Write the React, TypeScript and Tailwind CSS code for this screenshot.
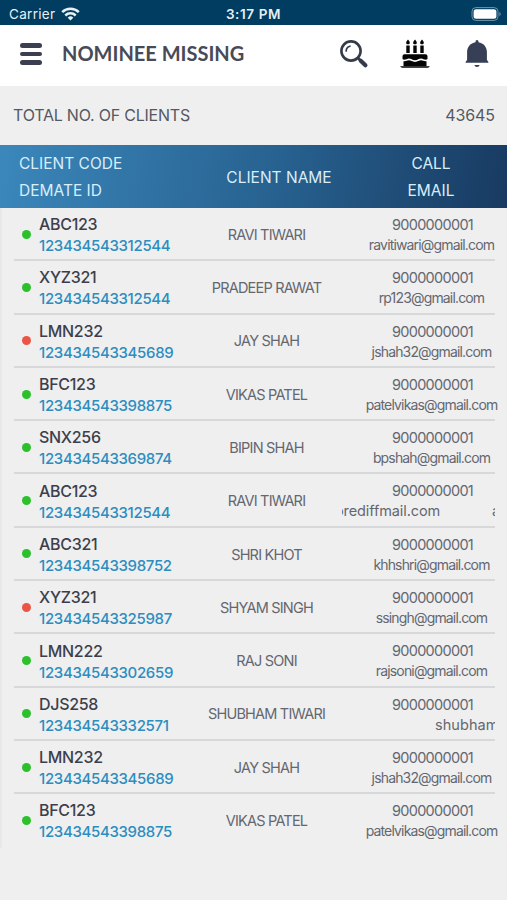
type Client = {
  code: string;
  demat: string;
  name: string;
  email: string;
  active: boolean;
  marquee?: "end" | "start";
};

const clients: Client[] = [
  { code: "ABC123", demat: "123434543312544", name: "RAVI TIWARI", email: "ravitiwari@gmail.com", active: true },
  { code: "XYZ321", demat: "123434543312544", name: "PRADEEP RAWAT", email: "rp123@gmail.com", active: true },
  { code: "LMN232", demat: "123434543345689", name: "JAY SHAH", email: "jshah32@gmail.com", active: false },
  { code: "BFC123", demat: "123434543398875", name: "VIKAS PATEL", email: "patelvikas@gmail.com", active: true },
  { code: "SNX256", demat: "123434543369874", name: "BIPIN SHAH", email: "bpshah@gmail.com", active: true },
  { code: "ABC123", demat: "123434543312544", name: "RAVI TIWARI", email: "orediffmail.com", active: true, marquee: "end" },
  { code: "ABC321", demat: "123434543398752", name: "SHRI KHOT", email: "khhshri@gmail.com", active: true },
  { code: "XYZ321", demat: "123434543325987", name: "SHYAM SINGH", email: "ssingh@gmail.com", active: false },
  { code: "LMN222", demat: "123434543302659", name: "RAJ SONI", email: "rajsoni@gmail.com", active: true },
  { code: "DJS258", demat: "123434543332571", name: "SHUBHAM TIWARI", email: "shubham", active: true, marquee: "start" },
  { code: "LMN232", demat: "123434543345689", name: "JAY SHAH", email: "jshah32@gmail.com", active: true },
  { code: "BFC123", demat: "123434543398875", name: "VIKAS PATEL", email: "patelvikas@gmail.com", active: true },
];

function StatusBar() {
  return (
    <div className="grid h-[25px] grid-cols-3 items-center bg-[#003d60] pt-[2px] text-[#e6f0f5]">
      <div className="flex items-center gap-[6px] pl-[9px] text-[13.5px] leading-4 tracking-[0.3px]">
        Carrier
        <svg width="19" height="14" viewBox="0 0 19 14" fill="none" stroke="currentColor" strokeWidth="2.5">
          <path d="M1.2 5.2a11.8 11.8 0 0 1 16.6 0" />
          <path d="M4.3 8.5a7.4 7.4 0 0 1 10.4 0" />
          <path d="M9.5 13.4 6.7 10.7a4 4 0 0 1 5.6 0z" fill="currentColor" stroke="none" />
        </svg>
      </div>
      <div className="text-center text-[13.5px] leading-4 font-semibold tracking-[0.6px] whitespace-nowrap">3:17 PM</div>
      <div className="flex justify-end pr-[6px]">
        <svg width="30" height="14" viewBox="0 0 30 14">
          <rect x="1" y="0.6" width="26" height="12.8" rx="3.8" fill="none" stroke="#6f97ad" strokeWidth="1" />
          <rect x="2.6" y="2.2" width="22.8" height="9.6" rx="2.5" fill="#fff" />
          <path d="M28.4 5v4a2.2 2.2 0 0 0 0-4z" fill="#6f97ad" />
        </svg>
      </div>
    </div>
  );
}

function SearchIcon() {
  return (
    <svg width="30" height="30" viewBox="0 0 30 30" fill="none" stroke="#363b4b" strokeLinecap="round">
      <circle cx="12" cy="12" r="9.6" strokeWidth="2.6" />
      <path d="M7.2 12a5 5 0 0 1 3.7-4.8" strokeWidth="1.7" />
      <path d="m19 19 2.5 2.5" strokeWidth="2.5" />
      <path d="m21.7 21.7 4.7 4.5" strokeWidth="4.2" />
    </svg>
  );
}

function CakeIcon() {
  return (
    <svg width="30" height="30" viewBox="0 0 30 30" fill="#050505">
      <path d="M8 .4c2.4 2.4 2.4 4.8 0 4.8S5.6 2.8 8 .4zM15 .4c2.4 2.4 2.4 4.8 0 4.8S12.6 2.8 15 .4zM22 .4c2.4 2.4 2.4 4.8 0 4.8S19.6 2.8 22 .4z" />
      <path d="M6.3 6.5h3.4v7.5H6.3zM13.3 6.5h3.4v7.5h-3.4zM20.3 6.5h3.4v7.5h-3.4z" />
      <path d="M4.5 15.2h21a2 2 0 0 1 2 2V20c-2 2-4.3-.5-6.3-.5-2.2 0-3.5 1.7-6.2 1.7s-4-1.7-6.2-1.7c-2 0-4.3 2.5-6.3.5v-2.8a2 2 0 0 1 2-2z" />
      <path d="M3.5 22.2c2 .5 3.6-.9 5.4-.9 2 0 3.3 1.6 6.1 1.6s4.1-1.6 6.1-1.6c1.8 0 3.4 1.4 5.4.9v5h-23z" />
      <path d="M0 27.2h30l-1.8 1.6H1.8z" />
    </svg>
  );
}

function BellIcon() {
  return (
    <svg width="24" height="28" viewBox="0 0 24 28" fill="#363f55">
      <path d="M12 0c1 0 1.5.9 1.5 2.2 5 .9 8.4 4.6 8.4 9.8v7.6c0 1.3 1.6 1.5 1.6 3.2H.5c0-1.700 1.600-1.900 1.600-3.200V12c0-5.200 3.400-8.900 8.400-9.800C10.500.9 11 0 12 0z" />
      <path d="M9.3 25h5.4a2.8 2.6 0 0 1-5.4 0z" />
    </svg>
  );
}

function Header() {
  return (
    <header className="flex h-[61px] items-center bg-white pb-[3px]">
      <div className="ml-[20px] flex w-[22px] flex-col gap-[4px]">
        <span className="h-[4.5px] rounded-full bg-[#3b3f4f]" />
        <span className="h-[4.5px] rounded-full bg-[#3b3f4f]" />
        <span className="h-[4.5px] rounded-full bg-[#3b3f4f]" />
      </div>
      <h1 className="ml-[20px] pb-[3px] font-['Lato',sans-serif] text-[20px] leading-6 font-bold whitespace-nowrap text-[#484b56]">
        NOMINEE MISSING
      </h1>
      <div className="ml-auto flex items-center pr-[18px]">
        <SearchIcon />
        <div className="ml-[31px]"><CakeIcon /></div>
        <div className="ml-[35px]"><BellIcon /></div>
      </div>
    </header>
  );
}

function Email({ client }: { client: Client }) {
  if (client.marquee === "end") {
    return (
      <div className="-ml-[8px] flex w-[153px] justify-between overflow-hidden text-[14.5px] tracking-[-0.1px] whitespace-nowrap">
        <span className="-ml-[7px]">{client.email}</span>
        <span className="-mr-[5px]">a</span>
      </div>
    );
  }
  if (client.marquee === "start") {
    return (
      <div className="-ml-[8px] w-[153px] overflow-hidden pl-[93px] text-[14.5px] tracking-[0.05px] whitespace-nowrap">
        {client.email}
      </div>
    );
  }
  return <div className="-mr-[18px] text-center text-[14px] tracking-[-0.84px] whitespace-nowrap">{client.email}</div>;
}

function Row({ client }: { client: Client }) {
  return (
    <li className="mr-[12px] ml-[12px] grid h-[53.3px] grid-cols-[169px_167px_145px] border-b-2 border-[#d7d8da] last:border-transparent">
      <div className="flex items-center pt-[1px] pl-[8px]">
        <span className={client.active ? "size-[9px] rounded-full bg-[#2cc02c]" : "size-[9px] rounded-full bg-[#ea5545]"} />
        <div className="ml-[8px] pt-[2px]">
          <div className="text-[16px] leading-[21px] font-medium tracking-[-0.3px] text-[#3c3f4b]">{client.code}</div>
          <div className="text-[15px] leading-[21px] font-medium tracking-[-0.33px] text-[#2c8dbf]">{client.demat}</div>
        </div>
      </div>
      <div className="flex items-center justify-center pt-[2px] text-[14.5px] tracking-[-0.8px] text-[#64676f]">{client.name}</div>
      <div className="pt-[6px] text-[#64676f]">
        <div className="-mr-[20px] text-center text-[14.5px] leading-[21px] tracking-[-0.7px]">9000000001</div>
        <div className="leading-[20px]"><Email client={client} /></div>
      </div>
    </li>
  );
}

export default function App() {
  return (
    <div className="h-[900px] w-[507px] overflow-hidden bg-[#efeff0] font-['Inter','Liberation_Sans',sans-serif]">
      <StatusBar />
      <Header />
      <div className="flex h-[59px] items-center justify-between pr-[12px] pb-[1px] pl-[13px] text-[16px] text-[#555861]">
        <span className="tracking-[-0.22px]">TOTAL NO. OF CLIENTS</span>
        <span className="tracking-[-0.1px]">43645</span>
      </div>
      <div className="grid h-[63px] grid-cols-[203px_152px_152px] items-center bg-[linear-gradient(100deg,#3b87bb,#27618f_55%,#183a61)] pt-[1px] text-[15.5px] leading-[27px] text-[#d9eefb]">
        <div className="pl-[19px]">
          <div>CLIENT CODE</div>
          <div>DEMATE ID</div>
        </div>
        <div className="text-center">CLIENT NAME</div>
        <div className="text-center">
          <div>CALL</div>
          <div>EMAIL</div>
        </div>
      </div>
      <ul className="h-[640px] border-l-2 border-[#e8e8ea]">
        {clients.map((client, i) => (
          <Row key={i} client={client} />
        ))}
      </ul>
    </div>
  );
}
